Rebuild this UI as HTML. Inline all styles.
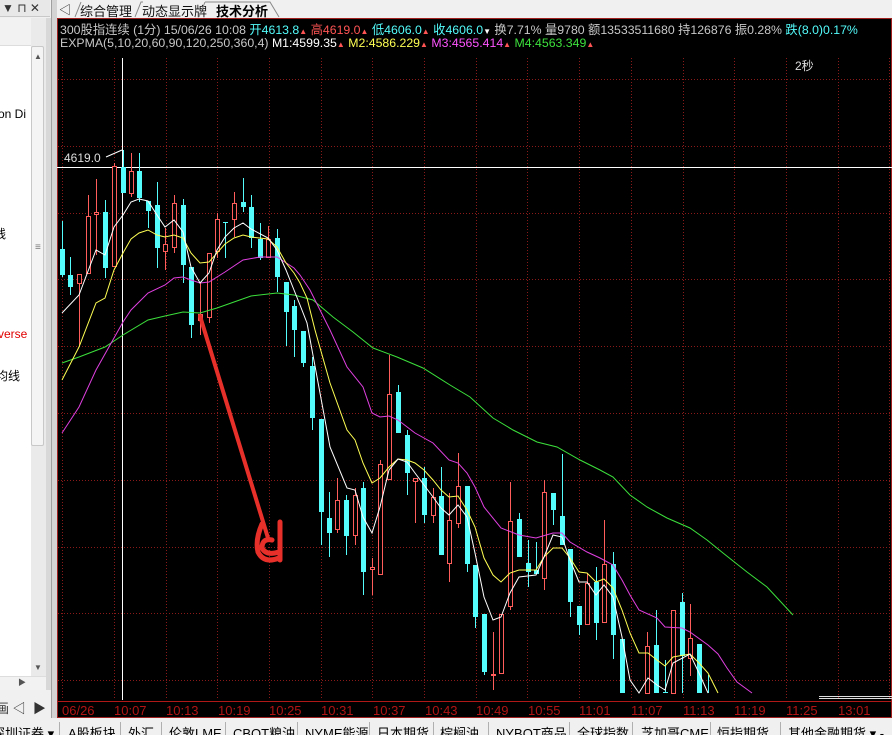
<!DOCTYPE html>
<html><head><meta charset="utf-8"><style>
*{margin:0;padding:0;box-sizing:border-box}
body{width:892px;height:735px;overflow:hidden;background:#f0f0f0;font-family:"Liberation Sans","Noto Sans CJK SC",sans-serif;position:relative}
.abs{position:absolute}
.hd{position:absolute;left:60px;font-size:12.3px;white-space:nowrap;color:#c8c8c8;font-family:"Liberation Sans","Noto Sans CJK SC",sans-serif}
.cy{color:#54fcfc}.rd{color:#ff5454}.yl{color:#ffff54}.mg{color:#ff54ff}.gr{color:#3ce03c}.wh{color:#fff}
.tri{color:#ff5454;font-size:8px}
.tabs{position:absolute;top:720px;left:0;width:892px;height:15px;font-size:13px;white-space:nowrap;color:#000;overflow:hidden}
.tabs span{position:absolute;top:3px}
.sep{position:absolute;top:2px;width:1px;height:14px;background:#b0b0b0}
</style></head><body>
<div class="abs" style="left:0;top:0;width:50px;height:17px;background:#e8e8e8;border-bottom:1px solid #c8c8c8"></div>
<div class="abs" style="left:2px;top:1px;font-size:12px;color:#333">▼ ⊓ ✕</div>
<div class="abs" style="left:0;top:18px;width:31px;height:672px;background:#fff"></div>
<div class="abs" style="left:0;top:18px;width:31px;height:28px;background:#f2f2f2;border-bottom:1px solid #ddd"></div>
<div class="abs" style="left:-2px;top:107px;font-size:12px;color:#000">on Di</div>
<div class="abs" style="left:-6px;top:225px;font-size:12px;color:#000">线</div>
<div class="abs" style="left:-2px;top:327px;font-size:12px;color:#e00000">verse</div>
<div class="abs" style="left:-4px;top:367px;font-size:12px;color:#000">均线</div>
<div class="abs" style="left:31px;top:18px;width:15px;height:672px;background:#eaeaea"></div>
<div class="abs" style="left:31px;top:46px;width:13px;height:400px;background:#f4f4f4;border:1px solid #c8c8c8;border-radius:2px"></div>
<div class="abs" style="left:34px;top:52px;font-size:8px;color:#555">▲</div>
<div class="abs" style="left:35px;top:246px;font-size:10px;color:#777;line-height:4px">≡</div>
<div class="abs" style="left:34px;top:663px;font-size:8px;color:#555">▼</div>
<div class="abs" style="left:0;top:676px;width:46px;height:14px;background:#f2f2f2;border-top:1px solid #ddd"></div>
<div class="abs" style="left:18px;top:677px;font-size:8px;color:#555">▶</div>
<div class="abs" style="left:46px;top:18px;width:5px;height:672px;background:#d8d8d8"></div>
<div class="abs" style="left:-4px;top:698px;font-size:13px;color:#333">画 ◁ &nbsp;▶</div>
<div class="abs" style="left:51px;top:0;width:6px;height:718px;background:#d4d4d4;border-left:1px solid #a0a0a0"></div>
<div class="abs" style="left:57px;top:0;width:835px;height:18px;background:#f0f0f0"></div>
<div class="abs" style="left:59px;top:1px;font-size:12px;color:#222">◁</div>
<div class="abs" style="left:80px;top:1px;font-size:13px;color:#111">综合管理</div>
<div class="abs" style="left:142px;top:1px;font-size:13px;color:#111">动态显示牌</div>
<div class="abs" style="left:216px;top:1px;font-size:13px;color:#000;font-weight:bold">技术分析</div>
<svg class="abs" style="left:57px;top:0" width="230" height="18"><path d="M18 17 L24 2 M78 17 L84 2 L86 2 M142 17 L148 2 M148 2 L213 2 L222 17" stroke="#888" fill="none" stroke-width="1"/></svg>
<svg class="abs" style="left:57px;top:18px" width="835" height="700" viewBox="57 18 835 700">
<rect x="57" y="18" width="835" height="700" fill="#000"/>
<rect x="57.5" y="18.5" width="834" height="699" fill="none" stroke="#a02020"/>
<g stroke="#8a1a1a" stroke-dasharray="1 2" stroke-width="1">
<line x1="58" x2="892" y1="79.5" y2="79.5"/><line x1="58" x2="892" y1="146.5" y2="146.5"/><line x1="58" x2="892" y1="213.5" y2="213.5"/><line x1="58" x2="892" y1="279.5" y2="279.5"/><line x1="58" x2="892" y1="346.5" y2="346.5"/><line x1="58" x2="892" y1="413.5" y2="413.5"/><line x1="58" x2="892" y1="480.5" y2="480.5"/><line x1="58" x2="892" y1="547.5" y2="547.5"/><line x1="58" x2="892" y1="613.5" y2="613.5"/><line x1="58" x2="892" y1="680.5" y2="680.5"/>
<line y1="58" y2="700" x1="62.5" x2="62.5"/><line y1="58" y2="700" x1="114.5" x2="114.5"/><line y1="58" y2="700" x1="166.5" x2="166.5"/><line y1="58" y2="700" x1="217.5" x2="217.5"/><line y1="58" y2="700" x1="269.5" x2="269.5"/><line y1="58" y2="700" x1="321.5" x2="321.5"/><line y1="58" y2="700" x1="372.5" x2="372.5"/><line y1="58" y2="700" x1="424.5" x2="424.5"/><line y1="58" y2="700" x1="476.5" x2="476.5"/><line y1="58" y2="700" x1="527.5" x2="527.5"/><line y1="58" y2="700" x1="579.5" x2="579.5"/><line y1="58" y2="700" x1="631.5" x2="631.5"/><line y1="58" y2="700" x1="683.5" x2="683.5"/><line y1="58" y2="700" x1="734.5" x2="734.5"/><line y1="58" y2="700" x1="786.5" x2="786.5"/><line y1="58" y2="700" x1="838.5" x2="838.5"/><line y1="58" y2="700" x1="889.5" x2="889.5"/>
</g>
<line x1="57" x2="892" y1="701.5" y2="701.5" stroke="#b01818"/>
<line x1="819" x2="892" y1="696.5" y2="696.5" stroke="#ddd"/><line x1="819" x2="892" y1="698.5" y2="698.5" stroke="#ddd"/>
<line x1="122.5" x2="122.5" y1="58" y2="700" stroke="#fff"/>
<line x1="57" x2="892" y1="167.5" y2="167.5" stroke="#fff"/>
<line x1="106" y1="157" x2="122" y2="150" stroke="#fff"/>
<text x="64" y="162" fill="#ddd" font-size="12" font-family="Liberation Sans,sans-serif">4619.0</text>
<text x="795" y="70" fill="#ddd" font-size="12" font-family="Liberation Sans,Noto Sans CJK SC,sans-serif">2秒</text>
<g stroke-width="1">
<g stroke="#54fcfc">
<line x1="62.5" x2="62.5" y1="221" y2="277"/><line x1="70.5" x2="70.5" y1="257" y2="295"/><line x1="105.5" x2="105.5" y1="200" y2="278"/><line x1="123.5" x2="123.5" y1="150" y2="193"/><line x1="139.5" x2="139.5" y1="153" y2="202"/><line x1="148.5" x2="148.5" y1="201" y2="228"/><line x1="157.5" x2="157.5" y1="182" y2="268"/><line x1="183.5" x2="183.5" y1="199" y2="283"/><line x1="191.5" x2="191.5" y1="267" y2="338"/><line x1="225.5" x2="225.5" y1="222" y2="258"/><line x1="243.5" x2="243.5" y1="178" y2="212"/><line x1="251.5" x2="251.5" y1="195" y2="248"/><line x1="260.5" x2="260.5" y1="223" y2="260"/><line x1="277.5" x2="277.5" y1="229" y2="292"/><line x1="286.5" x2="286.5" y1="282" y2="346"/><line x1="294.5" x2="294.5" y1="300" y2="357"/><line x1="303.5" x2="303.5" y1="331" y2="367"/><line x1="312.5" x2="312.5" y1="357" y2="430"/><line x1="321.5" x2="321.5" y1="419" y2="545"/><line x1="329.5" x2="329.5" y1="492" y2="557"/><line x1="346.5" x2="346.5" y1="495" y2="555"/><line x1="363.5" x2="363.5" y1="482" y2="595"/><line x1="398.5" x2="398.5" y1="385" y2="433"/><line x1="407.5" x2="407.5" y1="430" y2="495"/><line x1="424.5" x2="424.5" y1="467" y2="523"/><line x1="441.5" x2="441.5" y1="467" y2="555"/><line x1="467.5" x2="467.5" y1="486" y2="572"/><line x1="475.5" x2="475.5" y1="565" y2="628"/><line x1="484.5" x2="484.5" y1="614" y2="675"/><line x1="519.5" x2="519.5" y1="513" y2="557"/><line x1="528.5" x2="528.5" y1="540" y2="587"/><line x1="536.5" x2="536.5" y1="542" y2="574"/><line x1="553.5" x2="553.5" y1="493" y2="525"/><line x1="562.5" x2="562.5" y1="454" y2="545"/><line x1="570.5" x2="570.5" y1="549" y2="617"/><line x1="579.5" x2="579.5" y1="606" y2="635"/><line x1="596.5" x2="596.5" y1="567" y2="640"/><line x1="613.5" x2="613.5" y1="552" y2="659"/><line x1="656.5" x2="656.5" y1="610" y2="693"/><line x1="665.5" x2="665.5" y1="660" y2="693"/><line x1="682.5" x2="682.5" y1="593" y2="693"/><line x1="708.5" x2="708.5" y1="675" y2="693"/>
</g>
<g stroke="#ff5c5c">
<line x1="79.5" x2="79.5" y1="274" y2="347"/><line x1="88.5" x2="88.5" y1="195" y2="273"/><line x1="96.5" x2="96.5" y1="179" y2="255"/><line x1="114.5" x2="114.5" y1="163" y2="266"/><line x1="131.5" x2="131.5" y1="153" y2="197"/><line x1="165.5" x2="165.5" y1="228" y2="270"/><line x1="174.5" x2="174.5" y1="195" y2="253"/><line x1="200.5" x2="200.5" y1="283" y2="335"/><line x1="209.5" x2="209.5" y1="253" y2="323"/><line x1="217.5" x2="217.5" y1="213" y2="258"/><line x1="234.5" x2="234.5" y1="192" y2="237"/><line x1="268.5" x2="268.5" y1="226" y2="257"/><line x1="337.5" x2="337.5" y1="478" y2="533"/><line x1="355.5" x2="355.5" y1="488" y2="545"/><line x1="372.5" x2="372.5" y1="558" y2="595"/><line x1="380.5" x2="380.5" y1="460" y2="574"/><line x1="389.5" x2="389.5" y1="355" y2="479"/><line x1="415.5" x2="415.5" y1="478" y2="523"/><line x1="433.5" x2="433.5" y1="488" y2="523"/><line x1="449.5" x2="449.5" y1="493" y2="582"/><line x1="458.5" x2="458.5" y1="453" y2="528"/><line x1="493.5" x2="493.5" y1="632" y2="690"/><line x1="510.5" x2="510.5" y1="482" y2="610"/><line x1="544.5" x2="544.5" y1="480" y2="590"/><line x1="587.5" x2="587.5" y1="573" y2="624"/><line x1="604.5" x2="604.5" y1="520" y2="622"/><line x1="647.5" x2="647.5" y1="632" y2="693"/><line x1="690.5" x2="690.5" y1="604" y2="676"/>
</g></g>
<g fill="#54fcfc">
<rect x="60" y="249" width="5" height="26"/><rect x="68" y="275" width="5" height="12"/><rect x="103" y="212" width="5" height="56"/><rect x="121" y="167" width="5" height="26"/><rect x="137" y="171" width="5" height="27"/><rect x="146" y="201" width="5" height="10"/><rect x="155" y="205" width="5" height="43"/><rect x="181" y="205" width="5" height="60"/><rect x="189" y="267" width="5" height="58"/><rect x="223" y="222" width="5" height="1"/><rect x="241" y="202" width="5" height="5"/><rect x="249" y="207" width="5" height="31"/><rect x="258" y="239" width="5" height="19"/><rect x="275" y="238" width="5" height="39"/><rect x="284" y="282" width="5" height="30"/><rect x="292" y="306" width="5" height="24"/><rect x="301" y="331" width="5" height="32"/><rect x="310" y="366" width="5" height="52"/><rect x="319" y="419" width="5" height="93"/><rect x="327" y="518" width="5" height="15"/><rect x="344" y="500" width="5" height="36"/><rect x="361" y="488" width="5" height="84"/><rect x="396" y="392" width="5" height="41"/><rect x="405" y="435" width="5" height="38"/><rect x="422" y="478" width="5" height="37"/><rect x="439" y="496" width="5" height="59"/><rect x="465" y="486" width="5" height="78"/><rect x="473" y="565" width="5" height="52"/><rect x="482" y="614" width="5" height="58"/><rect x="517" y="519" width="5" height="38"/><rect x="526" y="563" width="5" height="9"/><rect x="534" y="570" width="5" height="4"/><rect x="551" y="493" width="5" height="17"/><rect x="560" y="516" width="5" height="29"/><rect x="568" y="549" width="5" height="53"/><rect x="577" y="606" width="5" height="19"/><rect x="594" y="582" width="5" height="41"/><rect x="611" y="564" width="5" height="71"/><rect x="620" y="639" width="5" height="54"/><rect x="654" y="645" width="5" height="48"/><rect x="663" y="692" width="5" height="1"/><rect x="680" y="602" width="5" height="54"/><rect x="697" y="644" width="5" height="49"/>
</g>
<g fill="#000" stroke="#ff5c5c">
<rect x="77.5" y="274.5" width="4" height="9"/><rect x="86.5" y="216.5" width="4" height="57"/><rect x="94.5" y="212.5" width="4" height="2"/><rect x="112.5" y="166.5" width="4" height="100"/><rect x="129.5" y="171.5" width="4" height="22"/><rect x="163.5" y="244.5" width="4" height="7"/><rect x="172.5" y="203.5" width="4" height="44"/><rect x="198.5" y="314.5" width="4" height="6"/><rect x="207.5" y="253.5" width="4" height="64"/><rect x="215.5" y="219.5" width="4" height="32"/><rect x="232.5" y="203.5" width="4" height="16"/><rect x="266.5" y="239.5" width="4" height="18"/><rect x="335.5" y="500.5" width="4" height="29"/><rect x="353.5" y="495.5" width="4" height="40"/><rect x="370.5" y="567.5" width="4" height="2"/><rect x="378.5" y="464.5" width="4" height="110"/><rect x="387.5" y="394.5" width="4" height="85"/><rect x="413.5" y="478.5" width="4" height="3"/><rect x="431.5" y="497.5" width="4" height="18"/><rect x="447.5" y="520.5" width="4" height="43"/><rect x="456.5" y="486.5" width="4" height="37"/><rect x="491.5" y="674.5" width="4" height="1"/><rect x="499.5" y="614.5" width="4" height="59"/><rect x="508.5" y="521.5" width="4" height="85"/><rect x="542.5" y="492.5" width="4" height="86"/><rect x="585.5" y="583.5" width="4" height="41"/><rect x="602.5" y="564.5" width="4" height="58"/><rect x="645.5" y="646.5" width="4" height="47"/><rect x="671.5" y="610.5" width="4" height="83"/><rect x="688.5" y="638.5" width="4" height="20"/>
</g>
<g fill="none" stroke-width="1">
<polyline stroke="#3ce03c" points="62,363 79,357 105,347 123,335 148,320 165,316 183,312 200,313 217,308 234,302 251,296 277,293 294,295 313,300 333,317 353,332 373,348 397,357 423,368 450,385 470,397 493,418 513,430 537,442 557,447 580,460 600,470 613,477 630,495 647,507 667,518 690,528 707,540 723,553 747,572 767,587 793,615"/>
<polyline stroke="#e040e0" points="62,433 79,407 96,370 114,338 123,322 131,310 148,293 165,285 174,278 183,277 191,280 200,283 209,282 225,272 243,260 260,257 277,257 294,268 300,275 310,290 320,310 330,330 347,367 363,387 372,413 380,417 389,416 398,420 415,433 433,443 449,460 458,463 467,473 475,487 484,507 501,528 519,535 536,538 553,533 562,533 570,542 587,552 600,558 613,565 622,580 630,595 639,610 657,618 665,627 682,628 690,632 708,645 718,654 727,668 737,682 752,693"/>
<polyline stroke="#ffff54" points="62,380 79,347 96,303 105,298 114,270 123,253 131,239 139,233 148,230 157,235 165,237 174,235 183,238 191,253 200,263 209,262 217,253 225,244 234,238 243,235 251,237 268,239 277,247 286,263 294,273 300,283 307,298 315,330 330,383 347,430 355,440 363,463 372,483 380,478 389,467 398,459 407,460 415,463 424,470 433,480 441,490 449,497 458,496 467,510 475,527 484,558 493,575 501,582 510,573 519,570 536,570 544,557 553,548 562,548 570,558 579,572 587,573 596,582 604,579 613,588 622,610 630,633 639,653 648,653 657,660 665,666 673,657 690,654 699,663 708,673 718,693"/>
<polyline stroke="#ffffff" points="62,313 79,295 96,250 105,255 114,227 123,215 131,202 139,199 148,201 157,215 165,227 174,220 183,232 191,267 200,283 209,273 217,250 225,237 234,228 243,223 251,229 268,238 277,250 286,270 294,290 300,305 307,323 320,393 330,447 347,488 355,490 363,517 372,533 380,507 389,470 398,459 407,462 415,473 424,485 433,497 441,508 449,515 458,505 467,517 475,553 484,597 493,620 501,617 510,593 519,577 536,575 544,557 553,535 562,537 570,560 579,582 587,582 596,595 604,585 613,597 622,637 630,680 639,693 648,678 657,685 665,690 673,663 690,654 699,673 708,693"/>
</g>
<g fill="none" stroke="#e8302a" stroke-linecap="round" stroke-linejoin="round">
<path d="M200 316 L268 538" stroke-width="4"/>
<path d="M262 524 Q255 540 258 552 Q264 564 279 558 M272 540 Q262 538 262 548 Q266 556 279 552 M280 522 L280 560" stroke-width="5"/>
</g>
<g fill="#b01414" font-size="13" font-family="Liberation Sans,sans-serif">
<text x="62" y="715">06/26</text><text x="114" y="715">10:07</text><text x="166" y="715">10:13</text><text x="218" y="715">10:19</text><text x="269" y="715">10:25</text><text x="321" y="715">10:31</text><text x="373" y="715">10:37</text><text x="425" y="715">10:43</text><text x="476" y="715">10:49</text><text x="528" y="715">10:55</text><text x="579" y="715">11:01</text><text x="631" y="715">11:07</text><text x="683" y="715">11:13</text><text x="734" y="715">11:19</text><text x="786" y="715">11:25</text><text x="838" y="715">13:01</text>
</g>
</svg>
<div class="hd" style="top:20px">300股指连续 (1分) 15/06/26 10:08 <span class="cy">开4613.8</span><span class="tri">▲</span> <span class="rd">高4619.0</span><span class="tri">▲</span> <span class="cy">低4606.0</span><span class="tri">▲</span> <span class="cy">收4606.0</span><span class="tri" style="color:#fff">▼</span> 换7.71% 量9780 额13533511680 持126876 振0.28% <span class="cy">跌(8.0)0.17%</span></div>
<div class="hd" style="top:36px">EXPMA(5,10,20,60,90,120,250,360,4) <span class="wh">M1:4599.35</span><span class="tri">▲</span> <span class="yl">M2:4586.229</span><span class="tri">▲</span> <span class="mg">M3:4565.414</span><span class="tri">▲</span> <span class="gr">M4:4563.349</span><span class="tri">▲</span></div>
<div class="tabs">
<span style="left:-8px">深圳证券 ▾</span><div class="sep" style="left:59px"></div>
<span style="left:68px">A股板块</span><div class="sep" style="left:120px"></div>
<span style="left:128px">外汇</span><div class="sep" style="left:161px"></div>
<span style="left:169px">伦敦LME</span><div class="sep" style="left:225px"></div>
<span style="left:233px">CBOT粮油</span><div class="sep" style="left:297px"></div>
<span style="left:305px">NYME能源</span><div class="sep" style="left:369px"></div>
<span style="left:377px">日本期货</span><div class="sep" style="left:433px"></div>
<span style="left:440px">棕榈油</span><div class="sep" style="left:488px"></div>
<span style="left:496px">NYBOT商品</span><div class="sep" style="left:569px"></div>
<span style="left:577px">全球指数</span><div class="sep" style="left:632px"></div>
<span style="left:641px">芝加哥CME</span><div class="sep" style="left:710px"></div>
<span style="left:717px">恒指期货</span><div class="sep" style="left:780px"></div>
<span style="left:788px">其他金融期货 ▾ -</span>
</div>
</body></html>
